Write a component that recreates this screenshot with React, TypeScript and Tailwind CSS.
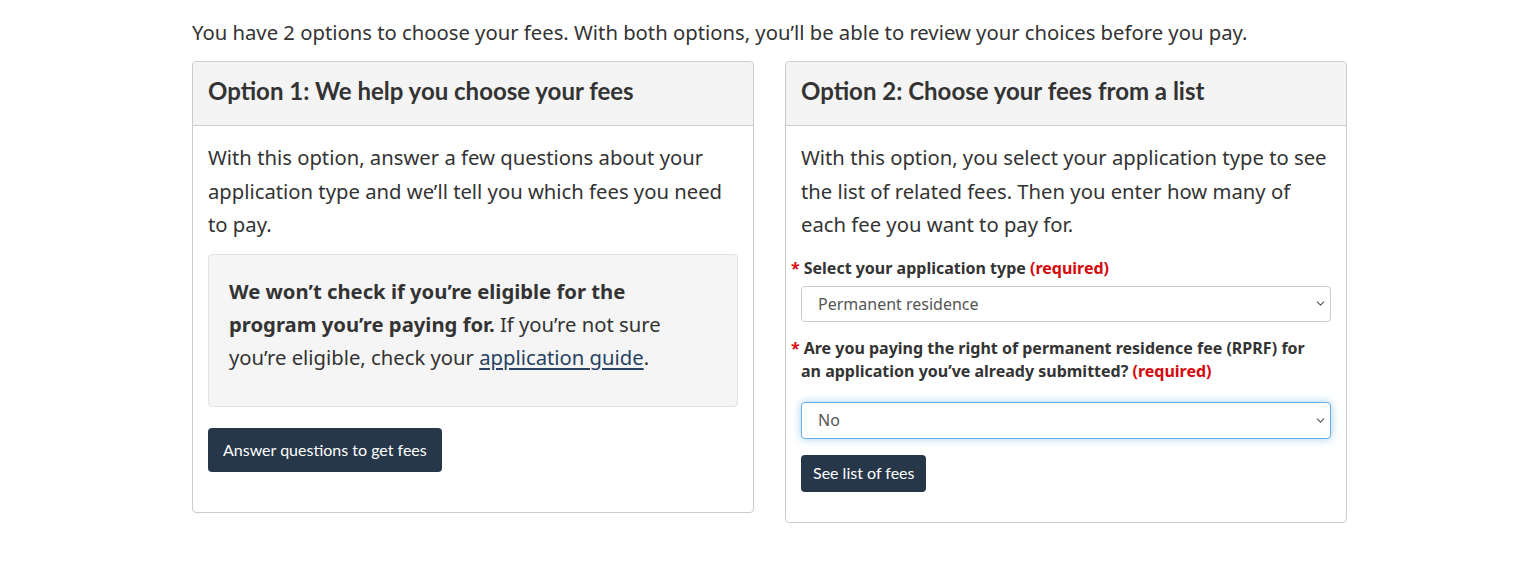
import { ChevronDown } from 'lucide-react';

const body = "font-['Noto_Sans',sans-serif]";
const lato = "font-['Lato',sans-serif]";

function Panel({ title, children }: { title: string; children: React.ReactNode }) {
  return (
    <div className="rounded-[4px] border border-[#cccccc] bg-white">
      <div className="flex h-[64px] items-center rounded-t-[4px] border-b border-[#cccccc] bg-[#f4f4f4] px-[15px] pb-[5px]">
        <h2 className={`${lato} text-[24px] font-bold text-[#333333]`}>{title}</h2>
      </div>
      <div className="px-[15px] pt-[15px]">{children}</div>
    </div>
  );
}

function Select({ value, focused }: { value: string; focused?: boolean }) {
  return (
    <div
      className={`flex items-center justify-between rounded-[4px] border bg-white pl-[16px] pr-[3px] ${
        focused
          ? 'h-[37px] border-[#66afe9] shadow-[0_0_8px_rgba(102,175,233,0.6)]'
          : 'h-[36px] border-[#cccccc]'
      }`}
    >
      <span className="text-[16px] text-[#555555]">{value}</span>
      <ChevronDown size={13} strokeWidth={2} className="text-[#555555]" />
    </div>
  );
}

export default function App() {
  return (
    <div className={`${body} min-h-[574px] bg-white text-[#333333]`}>
      <div className="ml-[192px] w-[1155px] pt-[16px]">
        <p className="text-[20.25px] leading-[33px]">
          You have 2 options to choose your fees. With both options, you’ll be able to review your choices before you pay.
        </p>

        <div className="mt-[12px] grid grid-cols-2 items-start gap-[31px]">
          {/* Option 1 */}
          <Panel title="Option 1: We help you choose your fees">
            <p className="text-[20.25px] leading-[33.5px]">
              With this option, answer a few questions about your application type and we’ll tell you which fees you need to pay.
            </p>
            <div className="mt-[12px] rounded-[4px] border border-[#e3e3e3] bg-[#f5f5f5] pb-[32px] pl-[20px] pr-[50px] pt-[20px]">
              <p className="text-[20.25px] leading-[33px]">
                <strong className="font-bold">We won’t check if you’re eligible for the program you’re paying for.</strong> If you’re not sure you’re eligible, check your{' '}
                <a href="#" className="text-[#284162] underline underline-offset-[3px]">
                  application guide
                </a>
                .
              </p>
            </div>
            <button
              type="button"
              className={`${lato} mb-[40px] mt-[21px] h-[44px] rounded-[4px] bg-[#26374a] px-[15px] text-[16px] text-white`}
            >
              Answer questions to get fees
            </button>
          </Panel>

          {/* Option 2 */}
          <Panel title="Option 2: Choose your fees from a list">
            <p className="text-[20.25px] leading-[33.5px]">
              With this option, you select your application type to see the list of related fees. Then you enter how many of each fee you want to pay for.
            </p>

            <label className="mt-[15px] block text-[16px] font-bold leading-[23px]">
              <span className="-ml-[10px] mr-[4px] text-[#d3080c]">*</span>
              Select your application type <span className="text-[#d3080c]">(required)</span>
            </label>
            <div className="mt-[6px]">
              <Select value="Permanent residence" />
            </div>

            <label className="mt-[15px] block pr-[20px] text-[16px] font-bold leading-[23px]">
              <span className="-ml-[10px] mr-[4px] text-[#d3080c]">*</span>
              Are you paying the right of permanent residence fee (RPRF) for an application you’ve already submitted?{' '}
              <span className="text-[#d3080c]">(required)</span>
            </label>
            <div className="mt-[19px]">
              <Select value="No" focused />
            </div>

            <button
              type="button"
              className={`${lato} mb-[30px] mt-[16px] h-[37px] rounded-[4px] bg-[#26374a] px-[12px] text-[16px] text-white`}
            >
              See list of fees
            </button>
          </Panel>
        </div>
      </div>
    </div>
  );
}
